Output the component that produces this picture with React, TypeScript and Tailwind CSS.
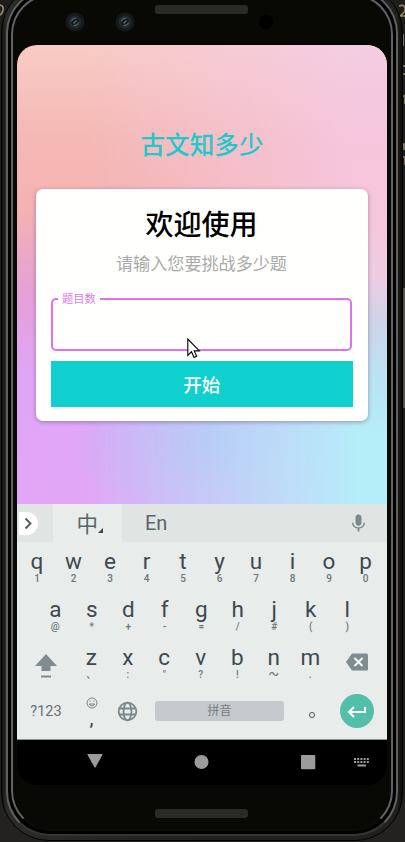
import React from "react";

type KeyDef = { main: string; sub: string };

const pairs = (main: string, sub: string[]): KeyDef[] =>
  main.split("").map((m, i) => ({ main: m, sub: sub[i] }));

const ROW1 = pairs("qwertyuiop", ["1", "2", "3", "4", "5", "6", "7", "8", "9", "0"]);
const ROW2 = pairs("asdfghjkl", ["@", "*", "+", "-", "=", "/", "#", "(", ")"]);
const ROW3 = pairs("zxcvbnm", ["、", ":", "\"", "?", "!", "～", "."]);

function Key({ main, sub }: KeyDef) {
  return (
    <div className="flex w-[36.5px] flex-col items-center">
      <span className="h-[24px] text-[22.5px] leading-[25px] text-[#3d494e]">{main}</span>
      <span className="h-[11px] text-[10px] font-medium leading-[11px] text-[#6d7779]">{sub}</span>
    </div>
  );
}

function Camera() {
  return (
    <svg width="20" height="20" viewBox="0 0 20 20">
      <circle cx="10" cy="10" r="9.6" fill="#15191a" />
      <circle cx="10" cy="10" r="6.500" fill="#22292a" />
      <circle cx="10" cy="10" r="3.600" fill="#12181a" />
      <path d="M6.500 9.500A3.500 3.500 0 0 1 11 6.500M13.500 10.500A4 4 0 0 1 8.500 13.200" stroke="#5c6668" strokeWidth="1.1" fill="none" />
      <path d="M8.500 11.500l3-3" stroke="#587278" strokeWidth="1.2" />
    </svg>
  );
}

function Speaker() {
  return (
    <div className="h-[9px] w-[93px] rounded-[3px] bg-[#161613] bg-[radial-gradient(#2b2b28_0.7px,transparent_0.8px)] bg-[size:2px_2px]" />
  );
}

function Sensors() {
  return (
    <div className="flex h-[45px] shrink-0 items-start pl-[47.5px]">
      <div className="mt-[11.5px] w-[50.5px]"><Camera /></div>
      <div className="mt-[12px] w-[40px]"><Camera /></div>
      <div className="mt-[5px]"><Speaker /></div>
      <div className="ml-[11px] mt-[15px] size-[14px] rounded-full bg-[#010101]" />
    </div>
  );
}

function Cursor() {
  return (
    <svg className="absolute left-[151px] top-[149px]" width="14" height="21" viewBox="0 0 14 21">
      <path d="M.8 1v16.4l3.7-3.6 2.5 5.7 2.7-1.2-2.5-5.4h5.2z" fill="#fff" stroke="#000" strokeWidth="1.1" />
    </svg>
  );
}

function Card() {
  return (
    <section className="relative ml-[18.5px] mt-[29px] flex h-[232px] w-[332.5px] flex-col rounded-[7px] bg-[#fffffd] pl-[15px] shadow-[0_1px_4px_rgba(80,50,100,0.45)]">
      <h2 className="mt-[16px] h-[36px] w-[302px] text-center text-[28px] font-medium leading-[36px] text-black">欢迎使用</h2>
      <p className="mt-[10px] h-[25px] w-[302px] text-center text-[17.1px] leading-[24px] text-[#a9a9a9]">请输入您要挑战多少题</p>
      <fieldset className="ml-[0.5px] mt-[13.5px] h-[61.5px] w-[301px] rounded-[5px] border-2 border-[#df70ee] pl-[5px]">
        <legend className="h-[18px] px-[4px] text-[11.3px] leading-[17px] text-[#dc7be9]">题目数</legend>
      </fieldset>
      <button className="mt-[10px] h-[46px] w-[302.5px] bg-[#0fcfcf] text-[18.5px] font-medium leading-[45px] text-white">开始</button>
      <Cursor />
    </section>
  );
}

function AppArea() {
  return (
    <div className="grid h-[459px] shrink-0">
      <div className="[grid-area:1/1] bg-[linear-gradient(180deg,#f8cbc5_0%,#f5b9b5_20%,#f4b2b1_36%,#e5a0d7_54%,#dfa5f7_72%,#e2a6f7_100%)]" />
      <div className="[grid-area:1/1] bg-[linear-gradient(180deg,#f4cde3_0%,#f5c5dc_22%,#f5c6dc_40%,#efcbe1_50%,#cfd4e8_60%,#b9e2f3_72%,#b5edf8_85%,#b5edf8_100%)] [mask-image:linear-gradient(90deg,transparent_18%,rgba(0,0,0,0.42)_50%,black_92%)]" />
      <div className="[grid-area:1/1] bg-[radial-gradient(ellipse_150px_100px_at_200px_395px,rgba(183,180,245,0.95),rgba(190,184,245,0.5)_50%,transparent)]" />
      <div className="relative [grid-area:1/1]">
        <h1 className="mt-[82px] h-[33px] text-center text-[24.6px] font-medium leading-[33px] text-[#1dc9cc]">古文知多少</h1>
        <Card />
      </div>
    </div>
  );
}

function Toolbar() {
  return (
    <div className="flex h-[38px] items-center bg-[#e0e4e3] text-[#58656a]">
      <div className="ml-[2px] flex h-[23px] w-[19px] items-center justify-center rounded-r-full bg-white">
        <svg width="9" height="13" viewBox="0 0 9 13" fill="none" stroke="#505b60" strokeWidth="1.9"><path d="M1.5 1.5l5 5-5 5" /></svg>
      </div>
      <div className="ml-[14.5px] flex h-full w-[69.5px] items-center justify-center bg-[#e8eceb]">
        <span className="ml-[6px] mt-[3px] text-[21.5px] leading-[30px]">中</span>
        <svg className="mt-[16px]" width="6" height="6" viewBox="0 0 6 6"><path d="M5 0v5H0z" fill="#37474f" /></svg>
      </div>
      <span className="ml-[23px] text-[20px]">En</span>
      <svg className="ml-auto mr-[18px]" width="21" height="21" viewBox="0 0 24 24" fill="#7b888c">
        <path d="M12 14.500c1.900 0 3.400-1.500 3.400-3.400V5.200c0-1.900-1.500-3.400-3.400-3.400S8.600 3.300 8.600 5.200v5.900c0 1.900 1.500 3.400 3.400 3.400z" />
        <path d="M17.800 11c0 3.100-2.600 5.300-5.800 5.300S6.200 14.100 6.200 11H4.500c0 3.400 2.700 6.200 6.500 6.700V21h2v-3.300c3.800-.5 6.500-3.300 6.500-6.700z" />
      </svg>
    </div>
  );
}

function Keyboard() {
  return (
    <div className="h-[236px] shrink-0 border-b border-[#8c9391] bg-[#e8eceb] font-['Roboto','Noto_Sans_CJK_SC',sans-serif]">
      <Toolbar />
      <div className="flex h-[48px] pl-[1.75px] pt-[7px]">{ROW1.map((k) => <Key key={k.main} {...k} />)}</div>
      <div className="flex h-[48px] pl-[20px] pt-[7px]">{ROW2.map((k) => <Key key={k.main} {...k} />)}</div>
      <div className="flex h-[47px] pt-[6.500px]">
        <div className="flex w-[56px] justify-center pl-[2px]">
          <svg className="mt-[8px]" width="24" height="26" viewBox="0 0 24 26" fill="#7f8c90">
            <path d="M12 1L23 13h-6.500v5h-9v-5H1z" /><path d="M7 22.500h10v2H7z" />
          </svg>
        </div>
        {ROW3.map((k) => <Key key={k.main} {...k} />)}
        <div className="flex w-[56px] justify-center">
          <svg className="mt-[8px]" width="24" height="18" viewBox="0 0 24 18">
            <path d="M7 .5h14.500a1.500 1.500 0 0 1 1.500 1.500v14a1.500 1.500 0 0 1-1.500 1.500H7L1 9z" fill="#7f8c90" />
            <path d="M9.500 5l8 8M17.500 5l-8 8" stroke="#f2f5f4" strokeWidth="2.100" />
          </svg>
        </div>
      </div>
      <div className="flex h-[52px] items-center">
        <span className="w-[58px] pt-px text-center text-[14.5px] text-[#647175]">?123</span>
        <div className="flex w-[33px] flex-col items-center pb-px">
          <svg className="mt-[3px]" width="12" height="12" viewBox="0 0 12 12" fill="none" stroke="#6d7779" strokeWidth=".9">
            <circle cx="6" cy="6" r="5" /><path d="M3.300 7a2.900 2.900 0 0 0 5.400 0z" /><path d="M4.100 3.600v1.200M7.900 3.600v1.200" />
          </svg>
          <span className="h-[18px] text-[20px] leading-[18px] text-[#37474f]">,</span>
        </div>
        <svg className="ml-[9px]" width="21" height="21" viewBox="0 0 21 21" fill="none" stroke="#7b888c" strokeWidth="1.800">
          <circle cx="10.500" cy="10.500" r="8.800" /><ellipse cx="10.500" cy="10.500" rx="4" ry="8.800" /><path d="M2.500 7.500h16M2.500 13.500h16" />
        </svg>
        <div className="ml-[17px] flex h-[20px] w-[129px] items-center justify-center rounded-[3px] bg-[#c5c9cb] text-[12px] text-[#747e81]">拼音</div>
        <div className="flex w-[55px] justify-center pt-[8px]">
          <div className="size-[6px] rounded-full border-[1.3px] border-[#4b575c]" />
        </div>
        <div className="ml-[1px] flex size-[34px] items-center justify-center rounded-full bg-[#52bfa9]">
          <svg width="20" height="14" viewBox="0 0 20 14" fill="none" stroke="#fff" strokeWidth="2"><path d="M18 3v5H2M7 3L2 8l5 5" /></svg>
        </div>
      </div>
    </div>
  );
}

function NavBar() {
  return (
    <svg className="h-[45px] w-[370px] shrink-0 bg-black" viewBox="0 0 370 45" fill="#9c9c9c">
      <path d="M71 14.500h14l-7 12.500z" stroke="#9c9c9c" strokeWidth="1.200" strokeLinejoin="round" />
      <circle cx="184.500" cy="22" r="7" />
      <rect x="284" y="15" width="14.300" height="14.300" rx="1" />
      {[0, 1, 2, 3, 4].map((i) => (
        <g key={i}>
          <rect x={337 + i * 3.200} y="18" width="2" height="2" />
          <rect x={337 + i * 3.200} y="21" width="2" height="2" />
        </g>
      ))}
      <rect x="340.500" y="24.500" width="8.500" height="2" />
    </svg>
  );
}

function Phone() {
  return (
    <div className="-mt-[16px] ml-px h-[857px] w-[402px] rounded-[48px] border border-black bg-[linear-gradient(90deg,#121210,#2b2b28_4px,#20201e_50%,#20201e_395px,#0c0c0b)] px-[4px] pb-[4px] pt-[4px]">
      <div className="h-full rounded-[44px] border-2 border-[#60605e] border-b-[#353533] bg-black p-[3px]">
        <div className="h-full rounded-[40px] border-2 border-[#626266] border-b-[#0c0c09] bg-[#080804]">
          <div className="ml-[4px] mt-[4px] flex w-[370px] flex-col">
            <Sensors />
            <div className="flex h-[740px] flex-col overflow-hidden rounded-[20px]">
              <AppArea />
              <Keyboard />
              <NavBar />
            </div>
            <div className="ml-[138px] mt-[24px]"><Speaker /></div>
          </div>
        </div>
      </div>
    </div>
  );
}

function Backdrop() {
  return (
    <svg className="[grid-area:1/1]" width="405" height="842" viewBox="0 0 405 842">
      <rect width="405" height="842" fill="#1f1e1b" />
      <rect y="790" width="405" height="52" fill="#232221" />
      <g fill="none" stroke="#928a69" strokeWidth="1.600">
        <path d="M0 5q4 1 3 5t-3 5M399 6q5-2 6 2t-5 8h5M403 34v12M403 66h2M403 74h2M403 96h2v8M402 144h2v6M402 157h3v8" />
      </g>
      <rect x="403" y="288" width="2" height="120" fill="#55544f" />
    </svg>
  );
}

export default function App() {
  return (
    <main className="grid h-[842px] w-[405px] overflow-hidden font-['Noto_Sans_CJK_SC','Roboto',sans-serif]">
      <Backdrop />
      <div className="z-10 [grid-area:1/1]"><Phone /></div>
    </main>
  );
}
